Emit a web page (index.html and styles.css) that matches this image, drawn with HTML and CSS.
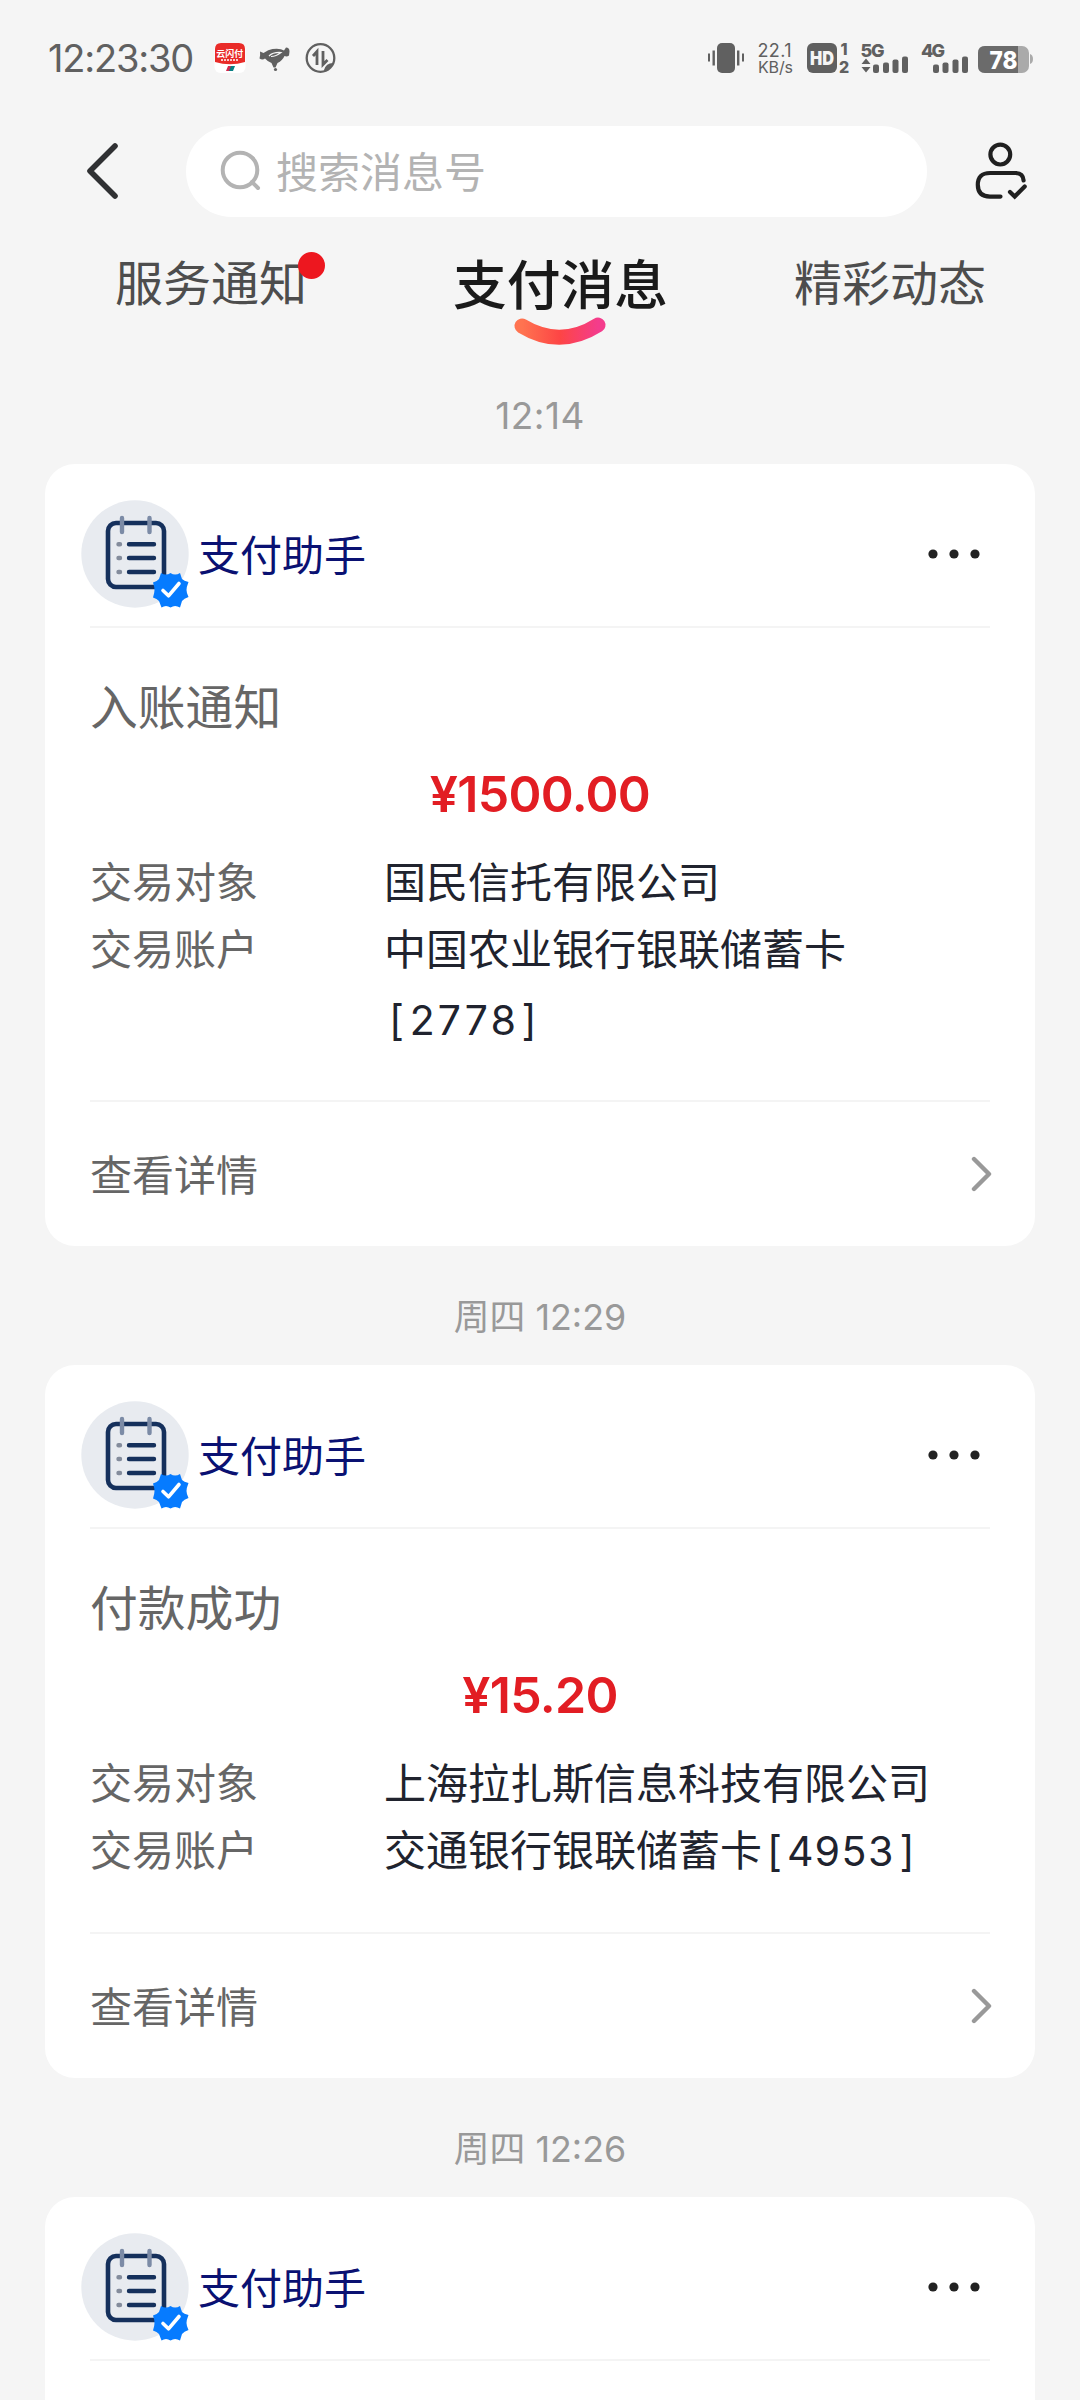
FILE: index.html
```html
<!DOCTYPE html>
<html lang="zh-CN">
<head>
<meta charset="utf-8">
<title>支付消息</title>
<link rel="stylesheet" href="styles.css">
</head>
<body>
<svg class="defs" aria-hidden="true">
  <symbol id="assistant" viewBox="0 0 108 108">
    <circle cx="54" cy="54" r="53.7" fill="#e8ebf0"/>
    <rect x="27" y="23" width="56" height="64" rx="8" fill="none" stroke="#15305c" stroke-width="4.6"/>
    <g stroke="#7c8ba6" stroke-width="4.4" stroke-linecap="round"><path d="M41 18v14M68.500 18v14"/></g>
    <g stroke="#15305c" stroke-width="4.4" stroke-linecap="round"><path d="M48 44.300h25M48 58h25M48 72h25"/></g>
    <g stroke="#848c9c" stroke-width="4.4" stroke-linecap="round"><path d="M37.500 44.300h1.500M37.500 58h1.500M37.500 72h1.500"/></g>
    <path fill="#067bff" d="M80 73 Q85 76 89.500 73 Q94 76 99 73 L101 79 Q103 81 107.500 82 Q105.500 87 105.500 90 Q105.500 93 107.500 97 Q103 98.500 101 101 L99 107.500 Q94 104.500 89.500 107.500 Q85 104.500 80.500 107.500 L78 101 Q76 98.500 72 97.500 Q73.500 93 73.500 90 Q73.500 87 72 82.500 Q76 81.500 78 79 Z"/>
    <path d="M82 90.500l5.500 5.300 10.500-12.300" fill="none" stroke="#fff" stroke-width="3.600" stroke-linecap="round" stroke-linejoin="round"/>
  </symbol>
  <symbol id="more" viewBox="0 0 54 12"><g fill="#222"><circle cx="6" cy="6" r="4.600"/><circle cx="27" cy="6" r="4.600"/><circle cx="48" cy="6" r="4.600"/></g></symbol>
  <symbol id="chevron" viewBox="0 0 22 36"><path d="M3 3l15 15L3 33" fill="none" stroke="#999" stroke-width="4.400" stroke-linecap="round" stroke-linejoin="round"/></symbol>
</svg>

<header class="status">
  <span class="clock">12:23:30</span>
  <svg class="apps" viewBox="0 0 122 32" width="122" height="32">
    <rect x="0.500" y="1" width="31" height="30" rx="6" fill="#fff"/>
    <path d="M1 7q0-6 6-6h18q6 0 6 6v13q-15 4.500-30 0z" fill="#e92b28"/>
    <text class="pay" x="2.300" y="14.500">云闪付</text>
    <path d="M7 18h18" stroke="#fff" stroke-width="1.500" stroke-dasharray="2 1"/>
    <path d="M14 24h4l-2 5h-4z" fill="#d4284e"/><path d="M17 24h4l-2 5h-4z" fill="#087f83"/>
    <path fill="#606060" d="M46 9.500l3.500 1.500q5-3.500 9-4 8-1 11.500 1.500l2-3q3.500 0 3.500 4l-.5 4q-2 1.500-4.500.5-2 4.500-7 7l-2 4.500h-2l-2-4.500q-4-1.500-6.500-4.500-2.500 2-5.500 0 1-3.500.5-7z"/><circle cx="61.500" cy="27.500" r="1.600" fill="#606060"/>
    <path d="M55 14q4-4 12-3.500-5 4-10 4" stroke="#f5f5f5" stroke-width="1.200" fill="none"/>
    <g fill="none" stroke="#606060"><circle cx="106.500" cy="16" r="13.800" stroke-width="2.300"/><path d="M99 14l4-4.500V23M109 9v13.500l4.500-4.500" stroke-width="2.800"/></g>
    <path d="M110 28q2-7 9-7-1 5-9 8z" fill="#606060"/>
  </svg>
  <svg class="system" viewBox="0 0 326 32" width="326" height="32">
    <g fill="#606060">
      <rect x="9" y="1" width="18" height="30" rx="5"/>
      <rect x="0" y="11.500" width="2" height="8"/><rect x="4.500" y="8.500" width="2.400" height="15"/><rect x="29" y="8.500" width="2.400" height="15"/><rect x="34" y="11.500" width="2" height="8"/>
      <text class="speed" x="49.500" y="14.500" textLength="34">22.1</text><text class="speed unit" x="50" y="30.500" textLength="35">KB/s</text>
      <rect x="99" y="1" width="30" height="30" rx="6"/>
      <text class="sim" x="132.500" y="12.500">1</text><text class="sim" x="131" y="30.500" textLength="11">2</text>
      <text class="net" x="152.500" y="15" textLength="24">5G</text><text class="net" x="213" y="15" textLength="24">4G</text>
      <path d="M153.500 22l4.500-5.500 4.500 5.500zM153.500 25h9l-4.500 5.500z"/>
      <rect x="165" y="22.500" width="6" height="8.500" rx="2"/><rect x="175" y="20.500" width="6" height="10.500" rx="2"/><rect x="184.500" y="17.500" width="6" height="13.500" rx="2"/><rect x="194" y="14.500" width="6" height="16.500" rx="2"/>
      <rect x="225" y="22.500" width="6" height="8.500" rx="2"/><rect x="234.500" y="20.500" width="6" height="10.500" rx="2"/><rect x="244.500" y="17.500" width="6" height="13.500" rx="2"/><rect x="254" y="14.500" width="6" height="16.500" rx="2"/>
    </g>
    <text class="hd" x="102" y="23" textLength="24" lengthAdjust="spacingAndGlyphs">HD</text>
    <rect x="270" y="4" width="51" height="27" rx="7" fill="#aaa"/><path d="M322 12q3 1 3 5t-3 5z" fill="#aaa"/>
    <path d="M277 4h33v27h-33q-7 0-7-7V11q0-7 7-7z" fill="#6b6b6b"/>
    <text class="battery" x="281.500" y="26.500" textLength="28" lengthAdjust="spacingAndGlyphs">78</text>
  </svg>
</header>

<div class="topbar">
  <svg class="back" viewBox="0 0 34 58" width="34" height="58"><path d="M30 4L5 29l25 25" fill="none" stroke="#303133" stroke-width="5.600" stroke-linecap="round" stroke-linejoin="round"/></svg>
  <div class="search">
    <svg viewBox="0 0 42 42" width="42" height="42"><g fill="none" stroke="#b3b3b3" stroke-width="4"><circle cx="20" cy="20" r="17.300"/><path d="M32 32l6 6" stroke-linecap="round"/></g></svg>
    <span>搜索消息号</span>
  </div>
  <svg class="contact" viewBox="0 0 54 60" width="54" height="60"><g fill="none" stroke="#202020" stroke-width="4.200" stroke-linecap="round"><circle cx="27.300" cy="13.600" r="9.900"/><path d="M50.600 39.500q-.5-7.500-8-7.500H17Q4.800 32 4.800 43.800T17 55.600h10.500"/><path d="M37 51l4.700 4.600 10-10"/></g></svg>
</div>

<nav class="tabs">
  <span class="tab">服务通知<i class="dot"></i></span>
  <span class="tab active">支付消息
    <svg class="smile" viewBox="0 0 92 30" width="92" height="30"><defs><linearGradient id="g"><stop offset="0" stop-color="#ff7350"/><stop offset=".5" stop-color="#fd4545"/><stop offset="1" stop-color="#f43c8c"/></linearGradient></defs><path d="M8 10q38 23 76-1" fill="none" stroke="url(#g)" stroke-width="15" stroke-linecap="round"/></svg>
  </span>
  <span class="tab">精彩动态</span>
</nav>

<main>
  <time class="first">12:14</time>
  <section class="card">
    <div class="head"><svg class="avatar"><use href="#assistant"/></svg><b>支付助手</b><svg class="more"><use href="#more"/></svg></div>
    <div class="body">
      <h2>入账通知</h2>
      <p class="amount">¥1500.00</p>
      <dl><dt>交易对象</dt><dd>国民信托有限公司</dd><dt>交易账户</dt><dd>中国农业银行银联储蓄卡<span class="num line"><i>[</i>2778<i>]</i></span></dd></dl>
    </div>
    <div class="foot"><span>查看详情</span><svg class="chev"><use href="#chevron"/></svg></div>
  </section>
  <time>周四 12:29</time>
  <section class="card">
    <div class="head"><svg class="avatar"><use href="#assistant"/></svg><b>支付助手</b><svg class="more"><use href="#more"/></svg></div>
    <div class="body">
      <h2>付款成功</h2>
      <p class="amount">¥15.20</p>
      <dl><dt>交易对象</dt><dd>上海拉扎斯信息科技有限公司</dd><dt>交易账户</dt><dd>交通银行银联储蓄卡<span class="num"><i>[</i>4953<i>]</i></span></dd></dl>
    </div>
    <div class="foot"><span>查看详情</span><svg class="chev"><use href="#chevron"/></svg></div>
  </section>
  <time>周四 12:26</time>
  <section class="card">
    <div class="head"><svg class="avatar"><use href="#assistant"/></svg><b>支付助手</b><svg class="more"><use href="#more"/></svg></div>
    <div class="body"></div>
  </section>
</main>
</body>
</html>
```

FILE: styles.css
```css
* { box-sizing: border-box; margin: 0; padding: 0; }
html, body { height: 2400px; overflow: hidden; }
body { width: 1080px; background: #f5f5f5; color: #666; font-family: Inter, "Noto Sans CJK SC", sans-serif; }
svg { display: block; flex: none; overflow: visible; }
.defs { position: absolute; width: 0; height: 0; }

.status { display: flex; align-items: center; height: 116px; padding-left: 48px; }
.clock { width: 166px; font-size: 38px; letter-spacing: -1.200px; line-height: 44px; color: #606060; white-space: nowrap; }
.system { margin-left: 372px; }
.pay { font-size: 9px; font-weight: 700; fill: #fff; }
.speed { font-size: 18px; }
.unit { font-size: 16px; }
.sim { font-size: 16px; font-weight: 800; }
.net { font-size: 18px; font-weight: 800; }
.hd { font-size: 19px; font-weight: 900; fill: #f5f5f5; }
.battery { font-size: 25px; font-weight: 800; fill: #fff; }

.topbar { display: flex; align-items: center; height: 110px; padding-left: 85px; }
.search { display: flex; align-items: center; width: 741px; height: 91px; margin-left: 67px; padding-left: 34px; border-radius: 46px; background: #fff; font-size: 42px; color: #b3b3b3; }
.search span { margin: 0 0 4px 14px; }
.contact { margin-left: 46px; }

.tabs { display: flex; justify-content: space-between; height: 148px; padding: 22px 94px 0 115px; }
.tab { position: relative; height: 72px; font-size: 48px; line-height: 72px; color: #4d4d4d; }
.active { margin-left: 20px; font-size: 53.800px; font-weight: 500; line-height: 75px; color: #1a1a1a; }
.dot { position: absolute; top: 4px; right: -18px; width: 27px; height: 27px; border-radius: 50%; background: #ed171f; }
.smile { position: absolute; left: 61px; top: 68px; }

time { display: flex; justify-content: center; height: 119px; padding-top: 11px; font-size: 35.800px; line-height: 120px; color: #999; }
time.first { height: 90px; padding-top: 0; line-height: 83px; font-size: 37px; letter-spacing: .5px; }
.card { width: 990px; margin: 0 auto; border-radius: 30px; background: #fff; }
.head { display: flex; align-items: center; height: 162px; padding: 18px 54px 0 36px; }
.avatar { width: 108px; height: 108px; }
.head b { margin: 0 0 3px 9px; font-size: 42px; font-weight: 400; color: #0a1172; }
.more { width: 54px; height: 12px; margin-left: auto; }
.body { margin: 0 45px; padding: 45px 0 47px; border: solid #f4f4f4; border-width: 2px 0; }
h2 { font-size: 47.800px; font-weight: 400; line-height: 70px; }
.amount { margin-top: 16px; font-size: 50px; font-weight: 600; letter-spacing: -.7px; line-height: 70px; text-align: center; color: #e21d23; }
dl { display: grid; grid-template-columns: 294px 1fr; margin-top: 20px; font-size: 42px; line-height: 67px; }
dd { color: #20232e; white-space: nowrap; }
.num { margin-left: -1px; font-size: 41px; font-feature-settings: "tnum"; letter-spacing: .4px; }
.num i { display: inline-block; width: 26px; font-style: normal; text-align: center; }
.line { display: block; height: 70px; line-height: 75px; }
.foot { display: flex; align-items: center; justify-content: space-between; height: 144px; padding: 0 42px 0 45px; font-size: 42px; }
.foot span { margin-bottom: 3px; }
.chev { width: 22px; height: 36px; }
```
